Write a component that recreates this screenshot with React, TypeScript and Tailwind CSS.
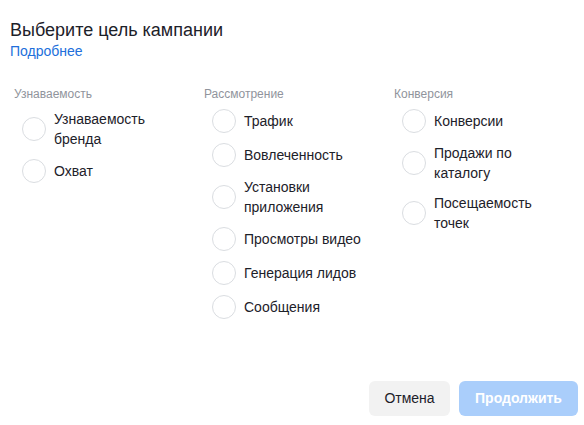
import React from "react";

type Col = { title: string; items: string[][] };

const cols: Col[] = [
  { title: "Узнаваемость", items: [["Узнаваемость", "бренда"], ["Охват"]] },
  {
    title: "Рассмотрение",
    items: [
      ["Трафик"],
      ["Вовлеченность"],
      ["Установки", "приложения"],
      ["Просмотры видео"],
      ["Генерация лидов"],
      ["Сообщения"],
    ],
  },
  {
    title: "Конверсия",
    items: [["Конверсии"], ["Продажи по", "каталогу"], ["Посещаемость", "точек"]],
  },
];

export default function App() {
  return (
    <div
      className="w-[584px] h-[425px] bg-white relative overflow-hidden"
      style={{ fontFamily: '"Liberation Sans", Arial, sans-serif' }}
    >
      <div className="pl-[10px] pt-[19px]">
        <div className="text-[18px] leading-[22px] text-[#1d2129]">Выберите цель кампании</div>
        <div className="text-[14px] leading-[18px] text-[#216fdb] mt-[1px]">Подробнее</div>
      </div>
      <div className="flex pl-[14px] mt-[27px]">
        {cols.map((c) => (
          <div key={c.title} className="w-[190px]">
            <div className="text-[12px] leading-[14px] text-[#90949c]">{c.title}</div>
            <div className="flex flex-col gap-[10px] mt-[8px] pl-[8px]">
              {c.items.map((it) => (
                <div key={it.join(" ")} className="flex items-center gap-[8px]">
                  <div className="w-[24px] h-[24px] rounded-full border border-[#dadde1] bg-white shrink-0" />
                  <div className="text-[14px] leading-[20px] text-[#1d2129]">
                    {it.map((l) => (
                      <div key={l}>{l}</div>
                    ))}
                  </div>
                </div>
              ))}
            </div>
          </div>
        ))}
      </div>
      <div className="absolute right-[6px] top-[381px] flex gap-[9px]">
        <div className="w-[81px] h-[35px] rounded-[6px] bg-[#f2f2f2] flex items-center justify-center text-[14px] text-[#1d2129]">
          Отмена
        </div>
        <div className="w-[119px] h-[35px] rounded-[6px] bg-[#aacefb] flex items-center justify-center text-[14px] font-bold text-white">
          Продолжить
        </div>
      </div>
    </div>
  );
}
